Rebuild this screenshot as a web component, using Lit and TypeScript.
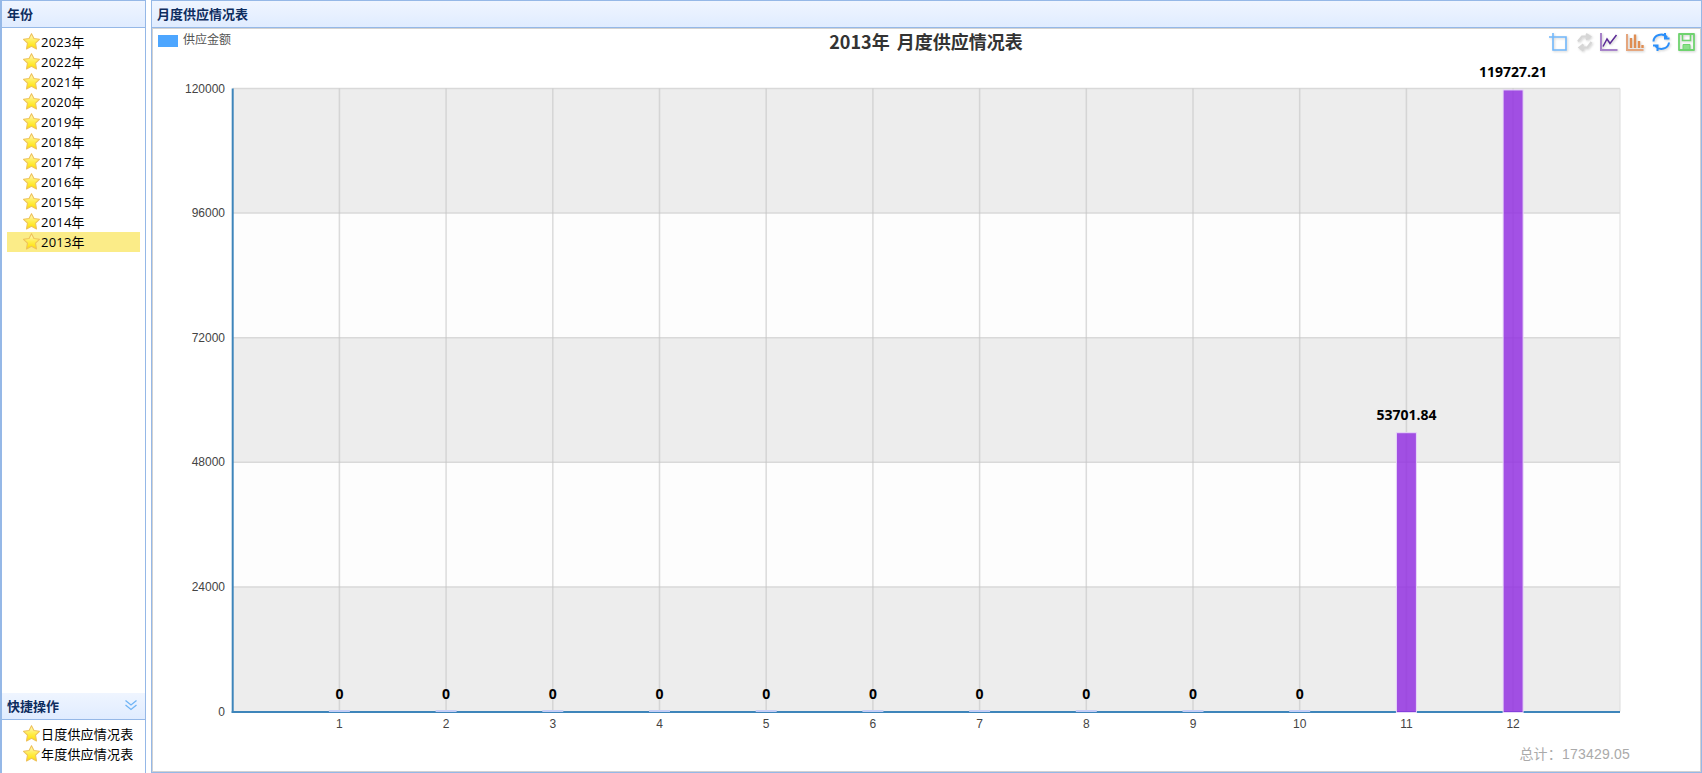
import { LitElement, html, css, svg } from "lit";
import { customElement } from "lit/decorators.js";

const YEARS = ["2023", "2022", "2021", "2020", "2019", "2018", "2017", "2016", "2015", "2014", "2013"];
const DATA = ["0", "0", "0", "0", "0", "0", "0", "0", "0", "0", "53701.84", "119727.21"];
const X0 = 232.7, STEP = 106.7, TOP = 88.5, BOTTOM = 711.5, RIGHT = 1620;
const yOf = (v: number) => BOTTOM - (v / 120000) * (BOTTOM - TOP);

const star = html`<svg class="star" viewBox="0 0 16 16">
  <defs><linearGradient id="sg" x1="0" y1="0" x2="0" y2="1"><stop offset="0" stop-color="#fff8cc"/><stop offset="0.5" stop-color="#ffee50"/><stop offset="1" stop-color="#ffdf00"/></linearGradient></defs>
  <path d="M8 .6 10.300 5.100 15.500 5.900 11.800 9.600 12.700 15 8 12.500 3.300 15 4.200 9.600 .5 5.900 5.700 5.100Z" fill="url(#sg)" stroke="#eec25a" stroke-width="1" stroke-linejoin="round"/>
</svg>`;

@customElement("app-root")
export class AppRoot extends LitElement {
  static styles = css`
    :host { display: flex; height: 773px; width: 1702px; gap: 5px; background: #fff; overflow: hidden;
      font-family: "Liberation Sans", "Noto Sans CJK SC", sans-serif; font-size: 12px; }
    .west { width: 146px; box-sizing: border-box; border-left: 2px solid #95b8e7; border-right: 1px solid #95b8e7; display: flex; flex-direction: column; }
    .center { flex: 1; border: 1px solid #95b8e7; display: flex; flex-direction: column; min-width: 0; }
    .head { height: 27px; box-sizing: border-box; background: linear-gradient(#eff5ff, #e0ecff); border-bottom: 1px solid #95b8e7; display: flex; align-items: center; justify-content: space-between;
      padding: 0 5px 2px; color: #0e2d5f; font: bold 13px "Noto Sans CJK SC", sans-serif; }
    .west .top { border-top: 1px solid #95b8e7; height: 28px; }
    .tree { flex: 1; margin: 0; padding: 4px 5px 0 5px; }
    .tree2 { flex: none; height: 53px; padding-top: 4px; box-sizing: border-box; }
    .node { height: 20px; box-sizing: border-box; display: flex; align-items: center; padding: 0 0 2px 16px; gap: 1px; color: #000; font-family: "Open Sans", "Noto Sans CJK SC", sans-serif; font-size: 13px; letter-spacing: 0.2px; white-space: nowrap; }
    .node.sel { background: #fbec88; }
    .star { width: 17px; height: 17px; flex: none; }
    .acc { height: 27px; background: linear-gradient(#eff5ff, #e0ecff); }
    .chevron { width: 14px; height: 12px; margin-right: 2px; }
    .chart { flex: 1; border: 1px solid #d2d2d2; min-height: 0; }
    .chart svg { display: block; width: 1547px; height: 742px; }
    text { font-family: "Liberation Sans", "Noto Sans CJK SC", sans-serif; }
    .tick { font-size: 12px; fill: #444; dominant-baseline: central; }
    .legend { font: 12px "Noto Sans CJK SC", sans-serif; fill: #555; dominant-baseline: central; }
    .title { font: bold 18px "Noto Sans CJK SC", sans-serif; fill: #333; text-anchor: middle; dominant-baseline: central; word-spacing: 3px; }
    .val { font: bold 14px "Open Sans", sans-serif; fill: #000; text-anchor: middle; dominant-baseline: central; }
    .total { font: 14px "Liberation Sans", "Noto Sans CJK SC", sans-serif; letter-spacing: 0.2px; fill: #aaa; text-anchor: end; dominant-baseline: central; }
    .ic { fill: none; stroke-width: 1.6; }
  `;

  private plot() {
    const bands = [0, 1, 2, 3, 4];
    const cols = Array.from({ length: 12 }, (_, i) => X0 + STEP * (i + 1));
    return svg`
      ${bands.map((b) => svg`<rect x=${X0} y=${yOf(120000 - 24000 * b)} width=${RIGHT - X0} height=${(BOTTOM - TOP) / 5} fill=${b % 2 ? "#fdfdfd" : "#ededed"}/>`)}
      ${[120000, 96000, 72000, 48000, 24000].map((v) => svg`<line x1=${X0} x2=${RIGHT} y1=${yOf(v)} y2=${yOf(v)} stroke="#d9d9d9" stroke-width="1.5"/>`)}
      ${cols.map((x) => svg`<line x1=${x} x2=${x} y1=${TOP} y2=${BOTTOM} stroke="#c4c4c4" stroke-opacity="0.6" stroke-width="1.5"/>`)}
      <line x1=${RIGHT} x2=${RIGHT} y1=${TOP} y2=${BOTTOM} stroke="#dcdcdc" stroke-width="1"/>
      <line x1=${X0} x2=${X0} y1=${TOP} y2=${BOTTOM + 1.5} stroke="#3e85ba" stroke-width="2"/>
      <line x1=${X0 - 1} x2=${RIGHT} y1=${BOTTOM + .5} y2=${BOTTOM + .5} stroke="#3e85ba" stroke-width="2"/>
      ${[120000, 96000, 72000, 48000, 24000, 0].map((v) => svg`<text class="tick" x="225" y=${yOf(v)} text-anchor="end">${v}</text>`)}
      ${cols.map((x, i) => svg`<text class="tick" x=${x} y="724" text-anchor="middle">${i + 1}</text>`)}
      ${DATA.map((d, i) => {
        const x = cols[i], v = parseFloat(d), y = yOf(Math.min(v, 120000));
        const labelY = v ? y - 18 : 693.5;
        return svg`
          ${v
            ? svg`<rect x=${x - 10} y=${y} width="20" height=${BOTTOM - y + 1} fill="#9332e0" fill-opacity="0.85" stroke="#e8d8f8" stroke-width="1"/>`
            : svg`<rect x=${x - 10.5} y=${BOTTOM - 1.5} width="21" height="2" fill="#c4cef6"/>`}
          <text class="val" x=${x} y=${labelY}>${d}</text>`;
      })}`;
  }

  private tools() {
    const g = (x: number, body: unknown) => svg`<g transform="translate(${x} 33)" class="ic" style="filter: drop-shadow(1.5px 1.5px 1px rgba(0,0,0,.18))">${body}</g>`;
    return svg`
      ${g(1549, svg`<path d="M4 4H17V17H4V7M0 4H7.500M4 0V7.500" stroke="#72b8fc"/>`)}
      ${g(1576, svg`<path d="M2 8.500 6 3.500H13M10 1 14 3.500 10 6.500M15.500 9 11.500 14.500H4.500M7.500 11.500 3.500 14.500 7.500 17.500" stroke="#d6d6d6" stroke-width="2.200"/>`)}
      ${g(1600, svg`<path d="M1 0V17H17.500" stroke="#a783c9" stroke-width="2"/><path d="M3 13.500 7 6 10 10.500 16.500 2" stroke="#5b2a96" stroke-width="1.500"/>`)}
      ${g(1626, svg`<path d="M1 1V17H17.500" stroke="#e5a67e" stroke-width="2"/>
        <path d="M5 15V5M9 15V1.500M13 15V8M16.500 15V12" stroke="#e08d52" stroke-width="2.400"/>`)}
      ${g(1652, svg`<path d="M1.500 8.500A7.500 7 0 0 1 15 4.500M13 0V5.500H17.500M17 9.500A7.500 7 0 0 1 3.500 13M5.500 18V12.500H1" stroke="#2b8ffa" stroke-width="2"/>`)}
      ${g(1677.5, svg`<path d="M1.500 1H16.500V17H1.500Z" stroke="#6fd36f" stroke-width="1.800" stroke-linejoin="round"/><path d="M5 1V7.500H13V1" stroke="#6fd36f" stroke-width="1.600"/><path d="M5.500 11.500H12.500V16.500H5.500Z" fill="#8ae08a" stroke="#6fd36f" stroke-width="1"/>`)}`;
  }

  render() {
    return html`
      <div class="west">
        <div class="head top">年份</div>
        <div class="tree">
          ${YEARS.map((y) => html`<div class="node ${y === "2013" ? "sel" : ""}">${star}<span>${y}年</span></div>`)}
        </div>
        <div class="head acc">快捷操作
          <svg class="chevron" viewBox="0 0 14 12"><path d="M1.500 1.500 7 6 12.500 1.500M1.500 6 7 10.500 12.500 6" fill="none" stroke="#6fb4f5" stroke-width="1.300"/></svg>
        </div>
        <div class="tree tree2">
          <div class="node">${star}<span>日度供应情况表</span></div>
          <div class="node">${star}<span>年度供应情况表</span></div>
        </div>
      </div>
      <div class="center">
        <div class="head">月度供应情况表</div>
        <div class="chart">
          <svg viewBox="153 29 1547 742">
            <rect x="158" y="35" width="20" height="12" fill="#4da6ff"/>
            <text class="legend" x="183" y="38">供应金额</text>
            <text class="title" x="926" y="41">2013年 月度供应情况表</text>
            ${this.tools()}
            ${this.plot()}
            <text class="total" x="1630" y="754">总计：173429.05</text>
          </svg>
        </div>
      </div>`;
  }
}
